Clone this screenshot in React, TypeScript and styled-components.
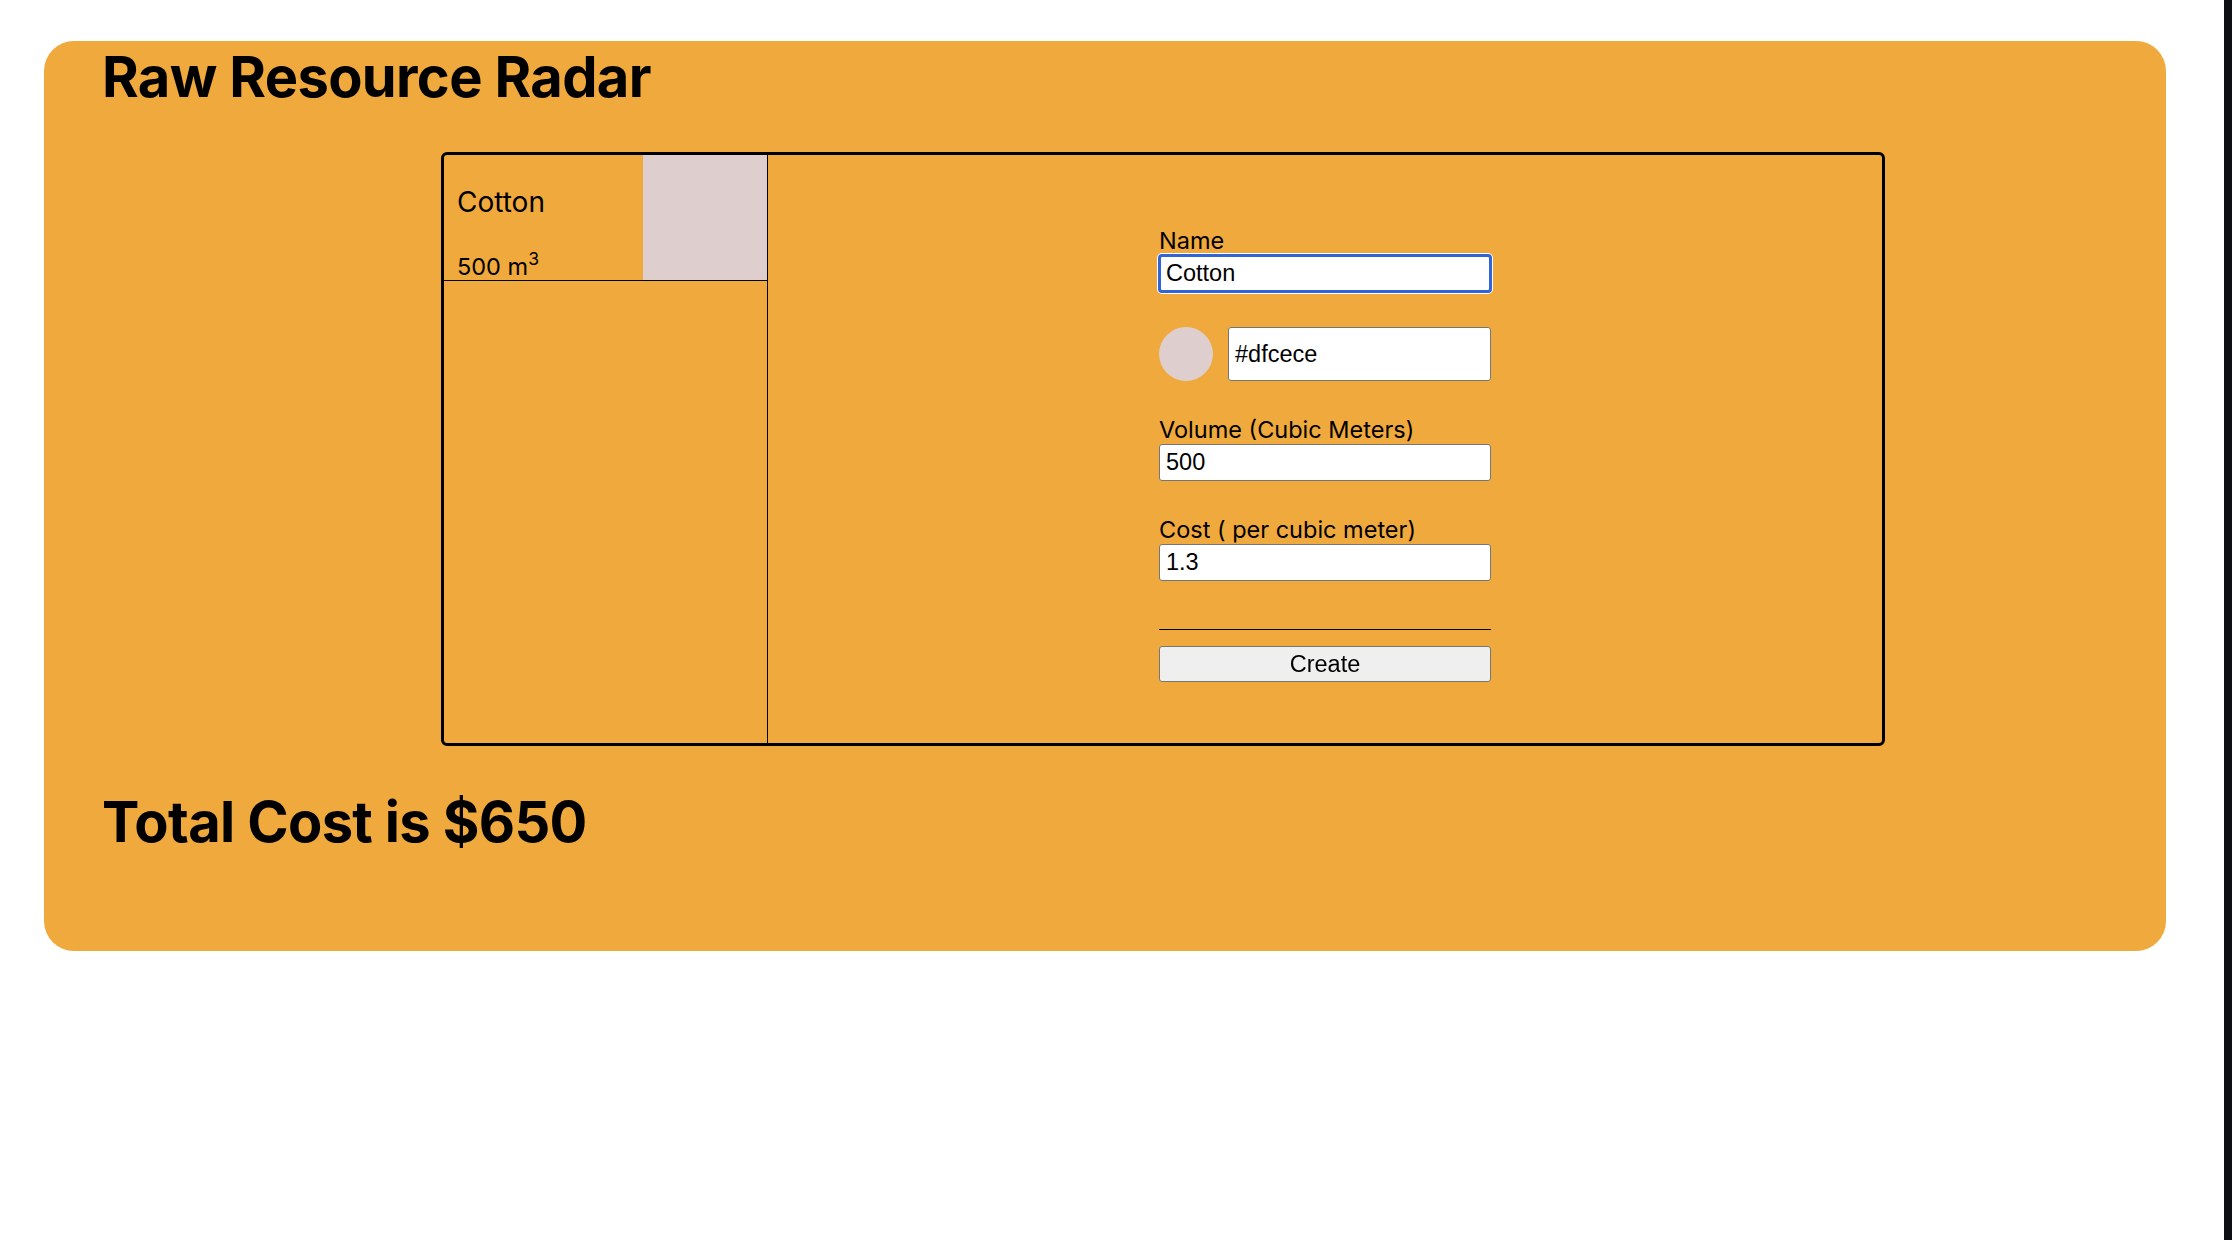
import React from "react";
import styled, { createGlobalStyle, css } from "styled-components";

const GlobalStyle = createGlobalStyle`
  html, body {
    margin: 0;
    padding: 0;
    background: #ffffff;
  }
  body {
    font-family: Inter, "Liberation Sans", sans-serif;
    color: #000000;
  }
`;

const Page = styled.div`
  display: flex;
  width: 2232px;
  height: 1240px;
  overflow: hidden;
  background: #ffffff;
`;

const Main = styled.main`
  flex: 1;
  box-sizing: border-box;
  padding: 41px 0 0 44px;
`;

const SideStrip = styled.aside`
  width: 8px;
  flex-shrink: 0;
  background: #0d0f14;
`;

const Card = styled.section`
  box-sizing: border-box;
  width: 2122px;
  height: 910px;
  background: #f0a93c;
  border-radius: 30px;
  padding: 2px 0 0 58px;
`;

const Heading = styled.h1`
  margin: 0;
  font-family: Inter, "Liberation Sans", sans-serif;
  font-weight: 700;
  font-size: 56px;
  letter-spacing: -0.65px;
  line-height: normal;
  color: #000;
`;

const Board = styled.div`
  box-sizing: border-box;
  display: flex;
  width: 1444px;
  height: 594px;
  margin: 41px 0 42px 339px;
  border: 3px solid #000;
  border-radius: 6px;
`;

const ResourceList = styled.ul`
  list-style: none;
  margin: 0;
  padding: 0;
  box-sizing: border-box;
  width: 324px;
  flex-shrink: 0;
  border-right: 1px solid #000;
`;

const ResourceItem = styled.li`
  box-sizing: border-box;
  display: flex;
  justify-content: space-between;
  height: 126px;
  border-bottom: 1px solid #000;
`;

const ItemText = styled.div`
  padding: 30px 0 0 13px;
`;

const ItemName = styled.div`
  font-family: Inter, sans-serif;
  font-size: 28px;
  line-height: normal;
`;

const ItemVolume = styled.div`
  margin-top: 33px;
  font-family: Inter, sans-serif;
  font-size: 23.5px;
  line-height: normal;

  sup {
    font-size: 17.5px;
    line-height: 0;
    vertical-align: 10px;
  }
`;

const Swatch = styled.div<{ $color: string }>`
  width: 124px;
  background: ${(p) => p.$color};
`;

const FormPane = styled.div`
  flex: 1;
  display: flex;
  justify-content: center;
  padding-top: 72px;
`;

const Form = styled.form`
  display: flex;
  flex-direction: column;
  gap: 35px;
  width: 332px;
`;

const Field = styled.div`
  display: flex;
  flex-direction: column;
`;

const Label = styled.label`
  font-family: Inter, sans-serif;
  font-size: 23.5px;
  line-height: 28px;
  color: #000;
`;

const TextInput = styled.input<{ $focused?: boolean; $tall?: boolean }>`
  box-sizing: border-box;
  width: 100%;
  height: ${(p) => (p.$tall ? "54px" : "37px")};
  margin: 0;
  padding: 0 6px;
  border: 1px solid #767676;
  border-radius: 3px;
  background: #ffffff;
  font-family: "Liberation Sans", Arial, sans-serif;
  font-size: 23.5px;
  color: #000;
  outline: none;

  ${(p) =>
    p.$focused &&
    css`
      outline: 3px solid #2f65d6;
      outline-offset: -2px;
      box-shadow: 0 0 0 2px #ffffff;
    `}
`;

const ColorRow = styled.div`
  display: flex;
  align-items: center;
  gap: 15px;
`;

const ColorDot = styled.div<{ $color: string }>`
  width: 54px;
  height: 54px;
  flex-shrink: 0;
  border-radius: 50%;
  background: ${(p) => p.$color};
`;

const Actions = styled.div`
  display: flex;
  flex-direction: column;
  padding-top: 13px;
`;

const Divider = styled.hr`
  margin: 0;
  border: none;
  border-top: 1px solid #000;
  height: 0;
`;

const CreateButton = styled.button`
  box-sizing: border-box;
  width: 100%;
  height: 36px;
  margin-top: 16px;
  padding: 0;
  border: 1px solid #767676;
  border-radius: 3px;
  background: #efefef;
  font-family: "Liberation Sans", Arial, sans-serif;
  font-size: 23.5px;
  color: #000;
`;

type Resource = { name: string; volume: number; color: string; cost: number };

const resources: Resource[] = [
  { name: "Cotton", volume: 500, color: "#dfcece", cost: 1.3 },
];

export default function App() {
  const total = resources.reduce((s, r) => s + r.volume * r.cost, 0);
  return (
    <>
      <GlobalStyle />
      <Page>
        <Main>
          <Card>
            <Heading>Raw Resource Radar</Heading>
            <Board>
              <ResourceList>
                {resources.map((r) => (
                  <ResourceItem key={r.name}>
                    <ItemText>
                      <ItemName>{r.name}</ItemName>
                      <ItemVolume>
                        {r.volume} m<sup>3</sup>
                      </ItemVolume>
                    </ItemText>
                    <Swatch $color={r.color} />
                  </ResourceItem>
                ))}
              </ResourceList>
              <FormPane>
                <Form onSubmit={(e) => e.preventDefault()}>
                  <Field>
                    <Label htmlFor="name">Name</Label>
                    <TextInput id="name" defaultValue="Cotton" $focused autoFocus />
                  </Field>
                  <ColorRow>
                    <ColorDot $color="#dfcece" />
                    <TextInput defaultValue="#dfcece" $tall />
                  </ColorRow>
                  <Field>
                    <Label htmlFor="volume">Volume (Cubic Meters)</Label>
                    <TextInput id="volume" defaultValue="500" />
                  </Field>
                  <Field>
                    <Label htmlFor="cost">Cost ( per cubic meter)</Label>
                    <TextInput id="cost" defaultValue="1.3" />
                  </Field>
                  <Actions>
                    <Divider />
                    <CreateButton type="submit">Create</CreateButton>
                  </Actions>
                </Form>
              </FormPane>
            </Board>
            <Heading>Total Cost is ${Math.round(total)}</Heading>
          </Card>
        </Main>
        <SideStrip />
      </Page>
    </>
  );
}
